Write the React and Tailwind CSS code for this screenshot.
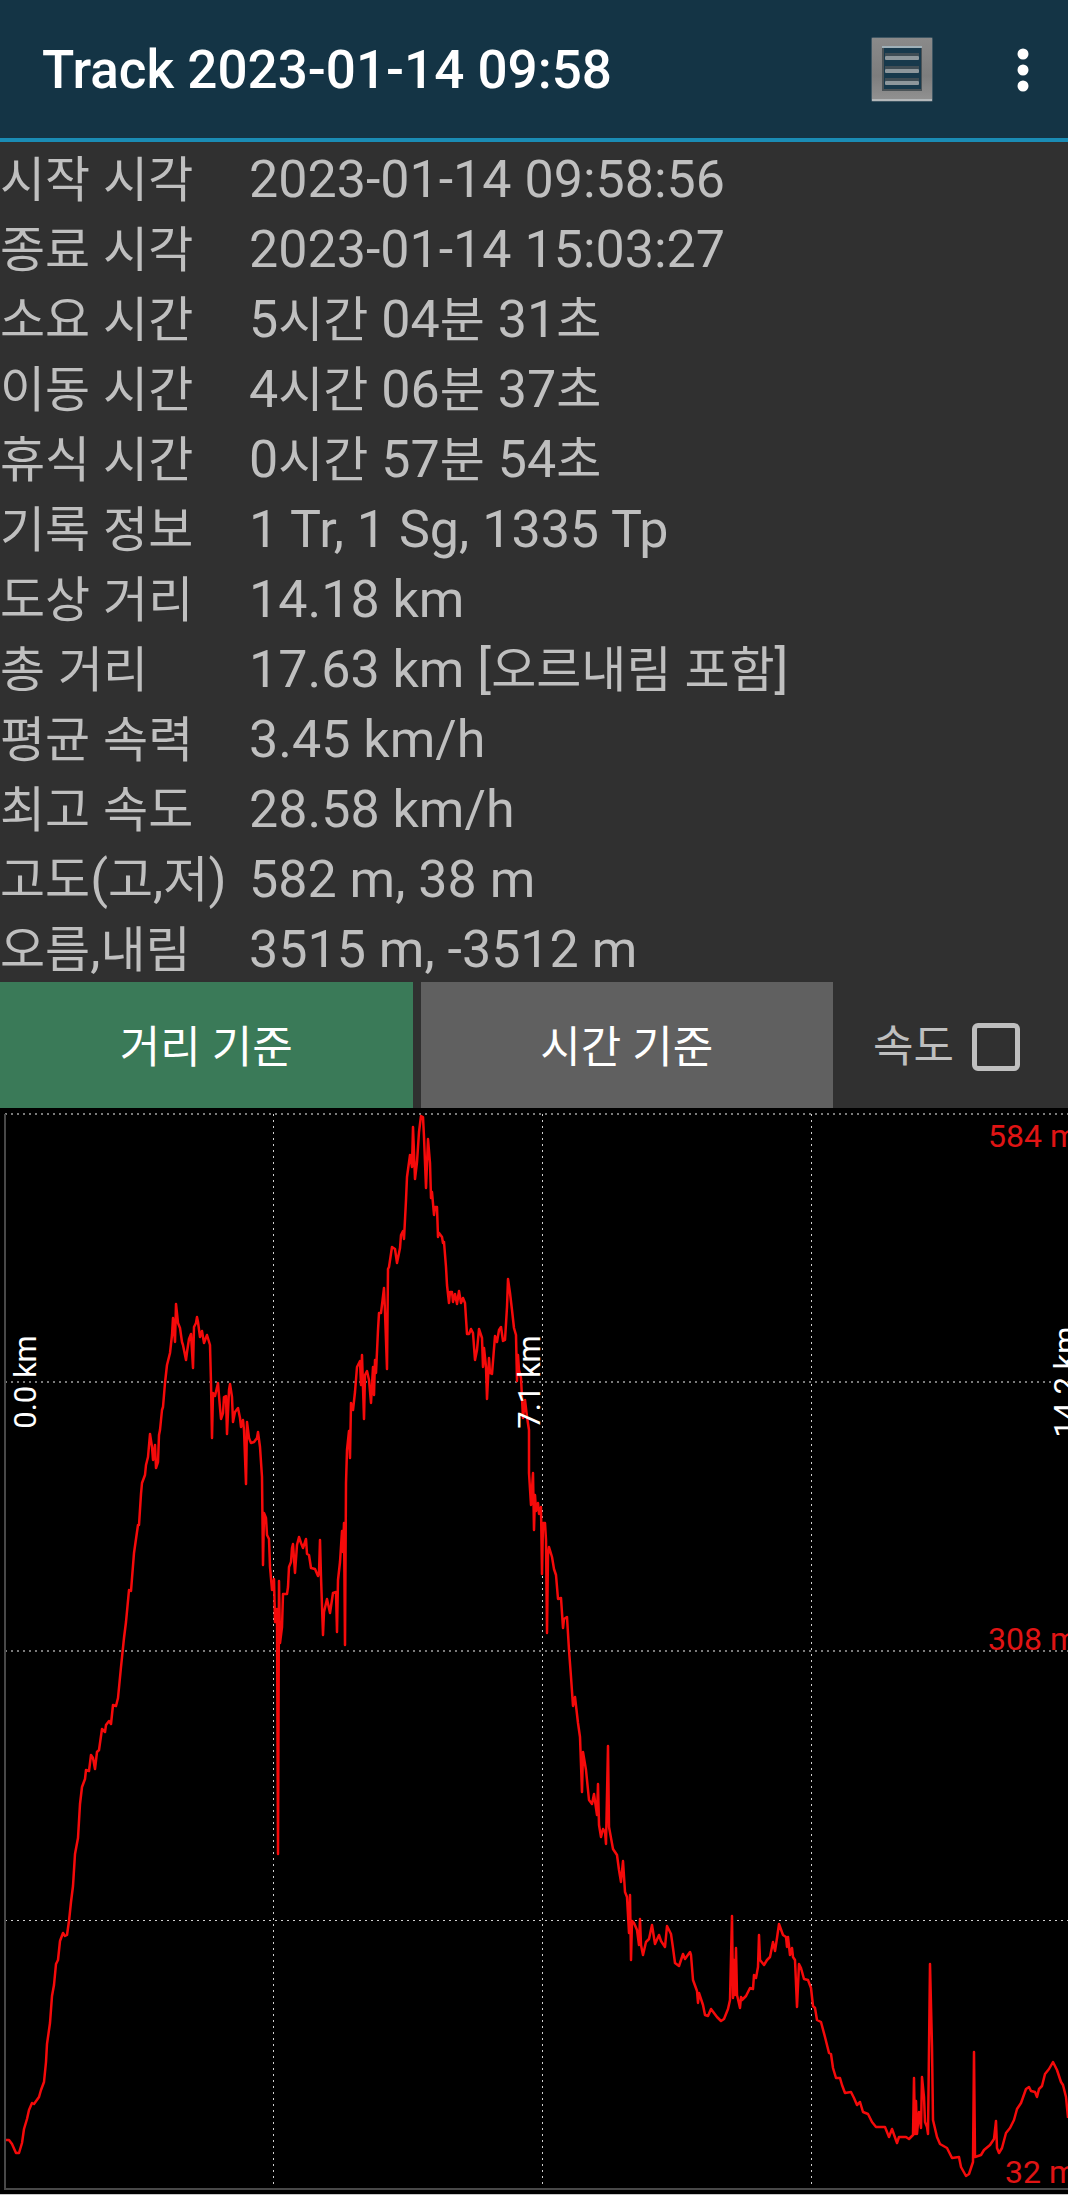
import { useState } from 'react';

const trackInfo = [
  { label: '시작 시각', value: '2023-01-14 09:58:56' },
  { label: '종료 시각', value: '2023-01-14 15:03:27' },
  { label: '소요 시간', value: '5시간 04분 31초' },
  { label: '이동 시간', value: '4시간 06분 37초' },
  { label: '휴식 시간', value: '0시간 57분 54초' },
  { label: '기록 정보', value: '1 Tr, 1 Sg, 1335 Tp' },
  { label: '도상 거리', value: '14.18 km' },
  { label: '총 거리', value: '17.63 km [오르내림 포함]' },
  { label: '평균 속력', value: '3.45 km/h' },
  { label: '최고 속도', value: '28.58 km/h' },
  { label: '고도(고,저)', value: '582 m, 38 m' },
  { label: '오름,내림', value: '3515 m, -3512 m' },
];

// elevation profile, x,y in chart units
const profile = `
6,1032 9,1032 12,1036 16,1045 19,1045 22,1035 24,1021 27,1011 29,1002 32,995 34,996 39,989 41,982 44,974 46,954 47,936
50,915 52,888 54,877 56,856 58,852 60,833 63,825 65,828 67,827 69,813 71,794 73,778 75,746 78,730 80,696 82,679 85,671
86,662 89,663 91,647 93,650 95,661 97,644 99,642 102,621 105,624 106,617 109,613 111,616 113,597 116,598 118,590 121,559
124,530 126,514 129,482 131,483 134,445 136,431 138,417 139,417 141,386 142,375 145,367 146,357 148,349 150,326 152,339
153,352 155,337 156,360 158,354 159,327 160,322 162,302 163,299 165,275 167,257 170,245 172,227 173,210 175,234 176,196
178,215 180,220 182,234 183,237 186,252 187,244 189,231 191,226 193,260 194,219 196,215 197,209 198,214 200,229 202,223
204,235 207,227 210,237 211,275 212,330 213,285 215,288 218,275 220,300 221,311 223,305 224,289 226,288 227,326 229,282
230,276 232,289 233,314 235,304 238,300 240,310 241,319 243,312 244,322 246,376 247,314 249,330 251,335 254,334 257,330
258,324 260,339 262,369 263,457 264,405 266,410 267,427 269,431 270,459 272,482 274,471 275,514 277,501 278,746 279,473
280,535 282,519 283,486 287,486 288,479 289,459 291,454 292,440 293,436 295,465 297,437 299,429 301,435 303,440 306,431
307,446 309,447 311,460 315,461 318,468 319,465 320,432 321,469 323,527 324,504 327,491 330,505 333,485 336,484 337,524
338,472 340,454 342,423 343,444 344,415 345,537 346,375 347,342 349,323 350,350 351,295 353,302 355,284 357,259 360,253
361,277 362,247 364,311 365,267 367,263 369,272 371,295 373,259 374,287 375,252 376,265 378,222 379,205 381,205 384,180
385,204 387,261 388,161 389,159 392,139 395,141 397,155 399,145 400,140 401,127 403,123 404,131 406,92 407,69 410,47
412,59 413,19 415,71 417,54 419,24 421,8 423,9 424,29 426,80 428,31 430,55 431,90 432,84 434,107 435,99 437,99 438,129
439,125 442,129 443,135 444,134 446,159 447,177 449,195 450,184 452,184 453,194 455,186 457,196 459,183 461,195 463,190
465,195 467,226 469,226 471,221 473,225 475,252 477,242 479,221 482,230 483,259 484,240 486,259 487,291 489,250 490,265
492,266 495,228 497,234 499,222 501,219 503,233 505,232 507,199 508,171 510,185 512,202 514,220 516,227 517,273 518,247
519,262 521,270 523,310 525,292 527,309 529,322 529,365 531,397 533,365 534,422 535,387 536,403 538,395 539,406 541,399
542,466 543,415 545,415 546,432 547,525 548,447 549,439 552,449 554,461 556,467 558,491 561,490 563,520 564,511 567,509
569,542 571,569 573,598 575,589 578,615 580,629 582,684 583,644 586,662 589,692 592,696 594,686 597,707 598,676 599,717
601,729 603,721 605,724 606,736 608,638 609,719 611,730 613,741 617,747 619,762 621,774 623,753 625,784 627,789 629,825
630,787 631,852 632,813 634,815 637,822 639,837 640,811 641,837 643,847 646,834 649,831 652,817 655,836 659,827 661,833
665,839 667,818 671,826 673,840 675,855 679,858 683,846 685,851 690,844 691,847 693,872 697,883 698,895 699,885 703,897
705,907 708,908 711,901 717,909 721,913 724,911 728,901 730,892 732,808 733,890 734,852 735,887 736,840 737,887 740,900
741,889 742,892 746,888 750,880 753,881 754,867 756,870 758,859 759,827 760,852 764,857 767,852 770,849 773,834 775,843
777,830 779,816 783,827 786,829 787,839 788,829 790,847 792,840 793,849 795,852 797,899 799,856 801,860 804,871 808,872
811,880 813,898 815,900 817,912 821,914 825,929 829,945 831,946 833,960 836,970 840,970 842,977 845,985 851,984 854,990
857,997 860,994 863,1004 868,1006 872,1014 876,1019 885,1019 889,1029 892,1021 897,1035 899,1029 906,1029 909,1031
913,1027 914,970 915,1026 916,993 917,1026 919,1004 921,1020 922,969 924,989 925,1014 927,1019 928,1026 930,856 932,939
933,1012 937,1029 940,1036 947,1040 952,1050 959,1049 961,1059 966,1068 969,1066 973,1054 974,944 975,1049 981,1047
984,1042 990,1037 994,1031 996,1013 997,1040 999,1045 1002,1040 1006,1025 1010,1020 1014,1012 1017,1001 1021,995
1026,981 1029,979 1031,983 1035,984 1037,989 1039,981 1042,978 1045,966 1049,961 1053,954 1057,962 1061,974 1063,977
1066,989 1068,1010`;

const distanceLabels = [
  { x: 36, text: '0.0 km' },
  { x: 540, text: '7.1 km' },
  { x: 1076, text: '14.2 km' },
];

const elevationLabels = [
  { x: 988, y: 39, text: '584 m' },
  { x: 988, y: 542, text: '308 m' },
  { x: 1005, y: 1075, text: '32 m' },
];

// Hangul is set a little smaller than the Latin text beside it
const MixedText = ({ children }) =>
  children.split(/([가-힣]+)/).map((part, i) =>
    i % 2 ? <span key={i} className="text-[49px] leading-none">{part}</span> : part
  );

const ListIcon = () => (
  <svg width="64" height="68" viewBox="0 0 64 68" aria-hidden="true">
    <defs>
      <linearGradient id="frame" x1="0" y1="0" x2="0" y2="1">
        <stop offset="0" stopColor="#8a8a8a" />
        <stop offset="0.6" stopColor="#7d7d7d" />
        <stop offset="1" stopColor="#929292" />
      </linearGradient>
    </defs>
    <rect x="1" y="1" width="62" height="65" rx="2" fill="#7f8d94" opacity="0.4" />
    <rect x="2" y="2" width="60" height="63" fill="url(#frame)" />
    <rect x="2" y="63" width="60" height="2" fill="#b4b8ba" />
    <rect x="12" y="11" width="40" height="44" fill="#4b5357" />
    <rect x="12" y="10" width="40" height="2" fill="#9fb0b8" />
    <rect x="14" y="12" width="37" height="41" fill="#17394c" />
    {[19, 32, 44].map((y) => (
      <g key={y}>
        <rect x="15" y={y - 2} width="34" height="3" fill="#3f4d55" />
        <rect x="15" y={y + 1} width="34" height="4" rx="1" fill="#8d979c" />
      </g>
    ))}
  </svg>
);

const MoreIcon = () => (
  <svg width="12" height="44" viewBox="0 0 12 44" fill="#fff" aria-hidden="true">
    <circle cx="6" cy="6" r="5.5" />
    <circle cx="6" cy="22" r="5.5" />
    <circle cx="6" cy="38" r="5.5" />
  </svg>
);

const ElevationChart = () => (
  <svg viewBox="0 0 1068 1087" className="block w-full h-auto bg-black" role="img" aria-label="고도 그래프">
    {/* Grid */}
    <g stroke="#7a7a7a" strokeWidth="2" strokeDasharray="2 4">
      <line x1="5" y1="6" x2="1068" y2="6" />
      <line x1="5" y1="274" x2="1068" y2="274" />
      <line x1="5" y1="543" x2="1068" y2="543" />
    </g>
    <g stroke="#cfcfcf" strokeWidth="1" strokeDasharray="2 4">
      <line x1="5" y1="812.5" x2="1068" y2="812.5" />
      <line x1="273.5" y1="6" x2="273.5" y2="1080" />
      <line x1="542.5" y1="6" x2="542.5" y2="1080" />
      <line x1="811.5" y1="6" x2="811.5" y2="1080" />
    </g>
    <path d="M5 6V1081H1068" fill="none" stroke="#484848" strokeWidth="2" />
    <line x1="0" y1="1086.5" x2="1068" y2="1086.5" stroke="#c8c8c8" />

    <polyline points={profile} fill="none" stroke="#f50a0a" strokeWidth="2.5" strokeLinejoin="round" />

    <g fontSize="31" fill="#fff" textAnchor="middle">
      {distanceLabels.map(({ x, text }) => (
        <text key={text} transform={`translate(${x} 274) rotate(-90)`}>{text}</text>
      ))}
    </g>
    <g fontSize="32" fill="#e01414">
      {elevationLabels.map(({ x, y, text }) => (
        <text key={text} x={x} y={y}>{text}</text>
      ))}
    </g>
  </svg>
);

const App = () => {
  const [basis, setBasis] = useState('distance');
  const [showSpeed, setShowSpeed] = useState(false);

  return (
    <div className="min-h-screen overflow-hidden bg-[#303030] text-[#bfbfbf] font-['Roboto','Noto_Sans_CJK_KR',sans-serif]">
      {/* Header */}
      <header className="flex items-center h-[142px] pt-0.5 pl-[42px] pr-[39px] bg-[#143445] border-b-4 border-[#1a8cb5]">
        <h1 className="flex-1 text-[53px] leading-[64px] font-medium text-white whitespace-nowrap">Track 2023-01-14 09:58</h1>
        <button type="button" aria-label="목록" className="mr-[83px]"><ListIcon /></button>
        <button type="button" aria-label="더보기"><MoreIcon /></button>
      </header>

      {/* Track info */}
      <table className="w-full border-collapse text-[52px] leading-[64px] whitespace-nowrap">
        <tbody>
          {trackInfo.map(({ label, value }) => (
            <tr key={label}>
              <th scope="row" className="w-[249px] pt-1.5 text-left font-normal"><MixedText>{label}</MixedText></th>
              <td className="pt-1.5"><MixedText>{value}</MixedText></td>
            </tr>
          ))}
        </tbody>
      </table>

      {/* Graph basis */}
      <div className="flex h-[126px] text-[44px]">
        <div className="flex flex-1 gap-2 text-white">
          <button type="button" onClick={() => setBasis('distance')}
            className={basis === 'distance' ? 'flex-1 pt-1.5 bg-[#3a7a58]' : 'flex-1 pt-1.5 bg-[#606060]'}>
            거리 기준
          </button>
          <button type="button" onClick={() => setBasis('time')}
            className={basis === 'time' ? 'flex-1 pt-1.5 bg-[#3a7a58]' : 'flex-1 pt-1.5 bg-[#606060]'}>
            시간 기준
          </button>
        </div>
        <label className="flex items-center justify-end gap-[18px] w-[235px] pt-1 pr-12">
          속도
          <input type="checkbox" checked={showSpeed} onChange={(e) => setShowSpeed(e.target.checked)}
            className="size-12 appearance-none rounded-md border-[5px] border-[#bfbfbf] checked:bg-[#3a7a58]" />
        </label>
      </div>

      <ElevationChart />
    </div>
  );
};

export default App;
